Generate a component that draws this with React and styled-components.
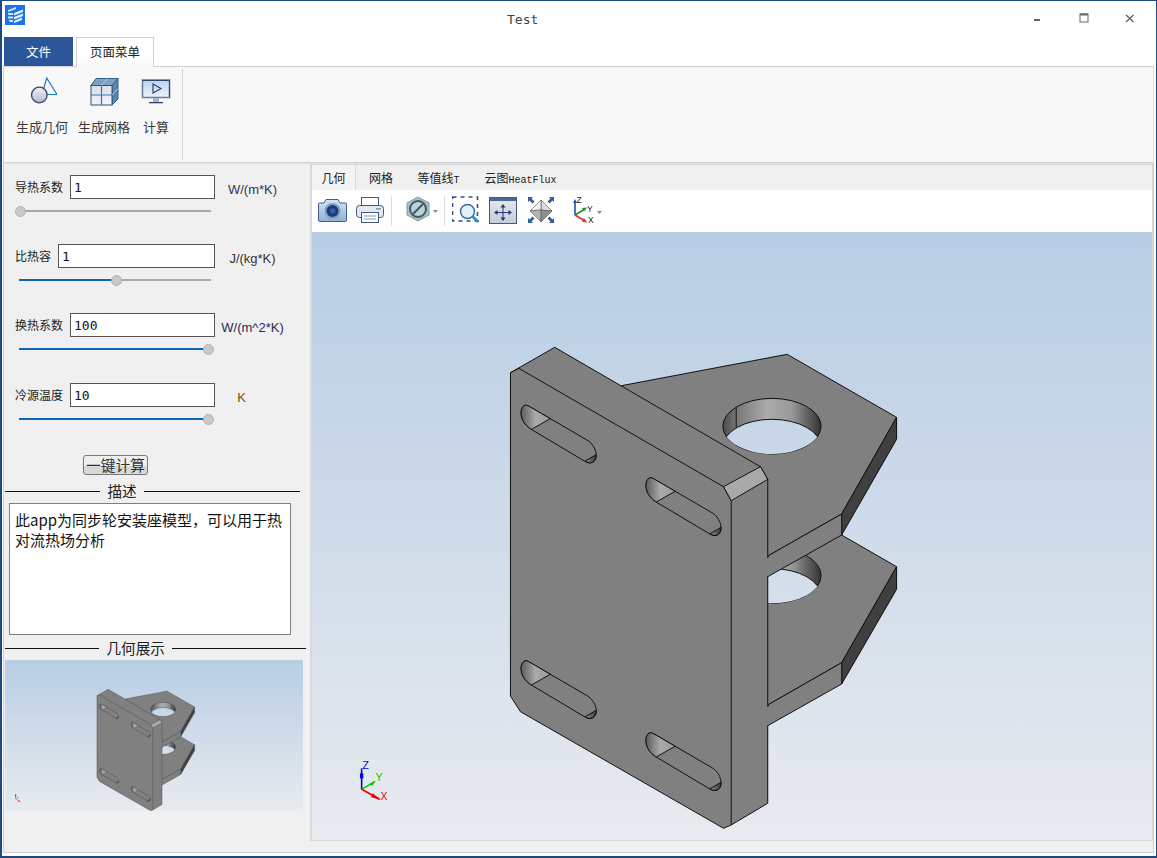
import React from 'react';
import styled, { createGlobalStyle } from 'styled-components';

const cjk = '"Noto Sans CJK SC", "Liberation Sans", sans-serif';
const mono = '"DejaVu Sans Mono", "Liberation Mono", monospace';
const navy = '#1f4a80';

const Global = createGlobalStyle`
  html, body { margin: 0; padding: 0; background: #fff; }
  * { box-sizing: border-box; }
`;

const Win = styled.div`
  width: 1157px; height: 858px; overflow: hidden; background: #fff;
  border-style: solid; border-color: ${navy}; border-width: 1px 1px 2px 2px;
  display: flex; flex-direction: column; font-family: ${cjk}; color: #222;
`;
const TitleBar = styled.div`
  height: 36px; flex: none; display: flex; align-items: flex-start; position: relative;
`;
const AppIcon = styled.svg`
  width: 20px; height: 20px; margin: 4px 0 0 3px; flex: none;
`;
const WinTitle = styled.div`
  position: absolute; left: 505px; top: 11px; font: 13px/16px ${mono}; color: #444;
`;
const WinButtons = styled.div`
  margin-left: auto; display: flex; padding-right: 2px;
`;
const WinButton = styled.svg`
  width: 45px; height: 26px; flex: none;
`;
const TabRow = styled.div`
  height: 29px; flex: none; display: flex; align-items: flex-end; padding-left: 2px; position: relative; z-index: 1;
`;
const FileTab = styled.div`
  width: 69px; height: 29px; background: #2b579a; color: #fff; font-size: 12.5px; line-height: 29px; text-align: center;
`;
const PageTab = styled.div`
  width: 78px; height: 30px; margin-left: 3px; margin-bottom: -1px; color: #222; font-size: 12.5px; line-height: 28px;
  text-align: center; border: 1px solid #d2d2d2; border-bottom: 0;
  background: linear-gradient(#fff 60%, #f8f8f8);
`;
const Ribbon = styled.div`
  height: 97px; flex: none; margin: 0 2px 0 1px; background: #f8f8f8; border: 1px solid #d2d2d2; border-right-color: #e0e0e0; display: flex;
`;
const RibbonGroup = styled.div`
  width: 179px; margin: 2px 0 2px; padding-left: 9px; border-right: 1px solid #d4d4d4; display: flex;
`;
const RibbonButton = styled.div`
  width: ${p => p.$w}px; display: flex; flex-direction: column; align-items: center; padding-top: 7px;
`;
const RibbonIcon = styled.svg`
  width: 30px; height: 30px; flex: none;
`;
const RibbonLabel = styled.div`
  margin-top: 12px; font-size: 13px; line-height: 18px; color: #3a3a3a; white-space: nowrap;
`;
const MainPanel = styled.div`
  flex: none; height: 690px; margin: 0 2px 0 1px; border: 1px solid #cfcfcf; border-top-color: #e4e4e4; background: #f0f0f0; display: flex;
`;
const LeftCol = styled.div`
  width: 306px; flex: none; padding-top: 11px; display: flex; flex-direction: column;
`;
const Param = styled.div`
  height: ${p => p.$h}px; flex: none;
`;
const ParamRow = styled.div`
  display: flex; padding-left: 11px;
`;
const ParamField = styled.div`
  width: 200px; flex: none; display: flex; gap: 7px; align-items: center;
`;
const ParamLabel = styled.div`
  font-size: 12px; line-height: 20px; white-space: nowrap; color: #222; margin-top: -1px; flex: none;
`;
const NumField = styled.div`
  flex: 1; height: 24px; background: #fff; border: 1px solid #555; padding-left: 3px; font: 13px/23px ${mono}; color: #111;
`;
const Unit = styled.div`
  width: 75px; flex: none; text-align: center; font: 13px/16px "Liberation Sans", sans-serif; margin-top: 7px; color: ${p => p.$c || '#333'};
  padding-right: ${p => p.$pr || 0}px;
`;
const SliderBox = styled.div`
  width: 196px; height: 12px; margin: 6px 0 0 11px; position: relative; display: flex; align-items: center; padding-left: 4px;
`;
const SliderOn = styled.div`
  height: 2px; background: #0d66b8; flex: none;
`;
const SliderOff = styled.div`
  height: 2px; background: #a9a9a9; flex: 1;
`;
const SliderHandle = styled.div`
  position: absolute; top: 0.5px; width: 11px; height: 11px; border-radius: 50%; background: #c9c9c9; border: 1px solid #b2b2b2;
`;
const PrimaryButton = styled.div`
  width: 65px; height: 20px; margin: 3px 0 0 79px; border: 1px solid #777; border-radius: 3px;
  background: linear-gradient(#efefef 55%, #d8d8d8 56%); font-size: 14.7px; line-height: 17px; text-align: center; color: #333; white-space: nowrap;
`;
const Section = styled.div`
  width: ${p => p.$w}px; margin-left: 1px; margin-top: ${p => p.$mt}px; display: flex; align-items: center; height: 18px; flex: none;
`;
const SectionLead = styled.div`
  width: ${p => p.$w}px; flex: none; height: 1px; background: #111;
`;
const SectionLine = styled.div`
  flex: 1; height: 1px; background: #111;
`;
const SectionText = styled.div`
  padding: 0 7.5px; font-size: 14.6px; line-height: 18px; color: #222; white-space: nowrap;
`;
const Description = styled.div`
  width: 282px; height: 132px; margin: 3px 0 0 5px; flex: none; border: 1px solid #808080; background: #fff;
  padding: 6px 5px; font-size: 15px; line-height: 20px; color: #111;
`;
const Thumb = styled.div`
  width: 298px; height: 151px; margin: 3px 0 0 1px; flex: none;
  background: linear-gradient(#b8cde4, #e8ebef);
`;
const RightCol = styled.div`
  width: 843px; height: 677px; flex: none; border: 1px solid #d8d8d8; border-left-width: 2px; display: flex; flex-direction: column;
`;
const ViewTabs = styled.div`
  height: 25px; flex: none; display: flex; background: #f0f0f0; font-size: 12px; line-height: 25px;
`;
const ViewTab = styled.div`
  flex: none; width: ${p => p.$w}px; text-align: center; white-space: nowrap; color: #222;
  border-right: ${p => (p.$active ? '1px solid #d8d8d8' : '0')};
  background: ${p => (p.$active ? '#f4f4f4' : 'transparent')};
`;
const Latin = styled.span`
  font: 10px "Liberation Mono", monospace;
`;
const Toolbar = styled.div`
  height: 42px; flex: none; background: #fff; display: flex; align-items: flex-start; padding: 6px 0 0 6px;
`;
const ToolIcon = styled.svg`
  flex: none; width: ${p => p.$w}px; height: 28px; margin-left: ${p => p.$ml || 0}px;
`;
const ToolSep = styled.div`
  width: 1px; height: 30px; background: #dcdcdc; flex: none; margin-left: ${p => p.$ml}px;
`;
const View = styled.div`
  flex: 1; min-height: 0; background: linear-gradient(#b8cde4, #e8ebef);
`;
const PartSvg = styled.svg`
  display: block; width: 100%; height: 100%;
`;

const SLOTS = [[521.3, 405.7], [646.3, 478.3], [521.3, 661.3], [646.3, 733.3]];
const SLOT_PATH = 'M7,0 L66,34.3 C71.5,37.5 75.3,44 75.3,50 C75.3,56 70,59.5 63.7,55.5 L10.3,23.7 C4,19.5 0,14 0,7 C0,2 3,-2 7,0 Z';

function Part({ sw, ids, stroke = '#111', crisp }) {
  const s = { stroke, strokeWidth: sw, strokeLinejoin: 'round' };
  return (
    <g shapeRendering={crisp ? 'crispEdges' : 'auto'}>
      {/* lower flange */}
      <polygon points="640,540 787.7,503.6 897.3,566.7 842.3,662.7 768.3,705" fill="#808080" {...s} />
      <ellipse cx="772.5" cy="575.5" rx="49.2" ry="27.8" fill={`url(#${ids}w)`} {...s} />
      <clipPath id={`${ids}c2`}><ellipse cx="772.5" cy="575.5" rx="49.2" ry="27.8" /></clipPath>
      <ellipse cx="772.5" cy="596.4" rx="49.2" ry="27.8" fill={`url(#${ids}b)`} clipPath={`url(#${ids}c2)`} {...s} />
      <polygon points="897.3,566.7 897.3,589.3 842.3,684 842.3,662.7" fill="#404040" {...s} />
      <polygon points="768.3,705 842.3,662.7 842.3,684 768.3,725.7" fill="#808080" {...s} />
      {/* upper flange */}
      <polygon points="621.7,385.7 787.7,354.3 897.3,417.3 842.3,514 768.3,556" fill="#808080" {...s} />
      <ellipse cx="772.5" cy="426.2" rx="49.2" ry="27.8" fill={`url(#${ids}w)`} {...s} />
      <clipPath id={`${ids}c1`}><ellipse cx="772.5" cy="426.2" rx="49.2" ry="27.8" /></clipPath>
      <ellipse cx="772.5" cy="447.1" rx="49.2" ry="27.8" fill={`url(#${ids}b)`} clipPath={`url(#${ids}c1)`} {...s} />
      <line x1="736.7" y1="407" x2="736.7" y2="428" {...s} />
      <polygon points="897.3,417.3 897.3,439.3 842.3,535 842.3,514" fill="#404040" {...s} />
      <polygon points="768.3,556 842.3,514 842.3,535 768.3,576.7" fill="#808080" {...s} />
      {/* plate */}
      <polygon points="510.7,372.7 555,347.3 761,466.7 768.3,479.3 768.3,803.3 731.7,825 724,828.3 520.7,711.7 510.7,696" fill="#808080" {...s} />
      <polyline points="510.7,372.7 519,368.3 724,486.7 731.7,500.7 731.7,825" fill="none" {...s} />
      <polygon points="724,486.7 731.7,500.7 768.3,479.3 761,466.7" fill="#a9a9a9" {...s} />
      {/* the flange thickness faces are flush with the plate edge: no line there */}
      <rect x="767" y="557.5" width="3" height="18" fill="#808080" />
      <rect x="767" y="706.5" width="3" height="18" fill="#808080" />
      {SLOTS.map(([x, y]) => (
        <g key={x + '-' + y} transform={`translate(${x} ${y})`}>
          <path d={SLOT_PATH} fill="#808080" {...s} />
          <path d="M7,0 L29.3,13 L10.3,23.7 C4,19.5 0,14 0,7 C0,2 3,-2 7,0 Z" fill={`url(#${ids}s)`} {...s} />
          <path d="M64,55.5 L75.2,49 C75.3,56 70,59.5 64,55.5 Z" fill={`url(#${ids}r)`} {...s} />
        </g>
      ))}
    </g>
  );
}

function PartDefs({ ids }) {
  return (
    <defs>
      <linearGradient id={`${ids}b`} gradientUnits="userSpaceOnUse" x1="0" y1="232" x2="0" y2="840">
        <stop offset="0" stopColor="#b8cde4" />
        <stop offset="1" stopColor="#e8ebef" />
      </linearGradient>
      <linearGradient id={`${ids}w`} x1="0" y1="0" x2="1" y2="0">
        <stop offset="0" stopColor="#4a4a4a" />
        <stop offset="0.14" stopColor="#777" />
        <stop offset="0.45" stopColor="#ababab" />
        <stop offset="0.7" stopColor="#999" />
        <stop offset="1" stopColor="#333" />
      </linearGradient>
      <linearGradient id={`${ids}s`} x1="0" y1="0" x2="1" y2="0">
        <stop offset="0" stopColor="#5c5c5c" />
        <stop offset="0.5" stopColor="#aaa" />
        <stop offset="1" stopColor="#9a9a9a" />
      </linearGradient>
      <linearGradient id={`${ids}r`} x1="0" y1="0" x2="1" y2="0">
        <stop offset="0" stopColor="#888" />
        <stop offset="1" stopColor="#3c3c3c" />
      </linearGradient>
    </defs>
  );
}

function Triad({ x, y, k = 1, labels = true }) {
  return (
    <g transform={`translate(${x} ${y}) scale(${k})`}>
      <line x1="0" y1="0" x2="0" y2="-21" stroke="#0000e6" strokeWidth="1.6" />
      <rect x="-1.7" y="-16" width="3.4" height="5" fill="#0000e6" />
      <line x1="0" y1="0" x2="13.5" y2="-8" stroke="#00c800" strokeWidth="1.4" />
      <polygon points="7,-5 13.5,-8.6 11,-3.6" fill="#00c800" />
      <line x1="0" y1="0" x2="18" y2="10" stroke="#f00000" strokeWidth="1.6" />
      <polygon points="11,4 19,10.5 9.5,8" fill="#f00000" />
      {labels && (
        <g fontFamily="Liberation Sans, sans-serif" fontSize="10.5">
          <text x="1" y="-20" fill="#0000e6">Z</text>
          <text x="14" y="-8" fill="#00c800">Y</text>
          <text x="19" y="11" fill="#f00000">X</text>
        </g>
      )}
    </g>
  );
}

function Slider({ value }) {
  const activeWidth = value === 0 ? 0 : 1 + value * 188;
  return (
    <SliderBox>
      <SliderOn style={{ width: activeWidth }} />
      <SliderOff />
      <SliderHandle style={{ left: value * 188 }} />
    </SliderBox>
  );
}

const PARAMS = [
  { label: '导热系数', val: '1', unit: 'W/(m*K)', s: 0, h: 69, c: '#2a3a55' },
  { label: '比热容', val: '1', unit: 'J/(kg*K)', s: 0.51, h: 69, c: '#3a3030' },
  { label: '换热系数', val: '100', unit: 'W/(m^2*K)', s: 1, h: 70, c: '#2a2a55' },
  { label: '冷源温度', val: '10', unit: 'K', s: 1, h: 69, pr: 22, c: '#8a4a00' },
];

const Arrow = ({ x, y }) => <polygon points={`${x},${y} ${x + 5},${y} ${x + 2.5},${y + 3}`} fill="#888" />;

export default function App() {
  return (
    <Win>
      <Global />
      <TitleBar>
        <AppIcon viewBox="0 0 20 20">
          <rect width="20" height="20" fill="#1a73e8" />
          <path d="M3 5 L11 2 V4 L3 7Z M3 8 H8 V10 H3Z M3 11.5 H8 V13.5 H3Z M3.5 15 H8 V17 H5Z" fill="#d4e6fc" />
          <path d="M9 8 L18 4.5 V7 L9 10.5Z M9 12 L18 8.5 V11 L9 14.5Z M9 16 L17 12.5 V15 L9 18Z" fill="#e6f1ff" />
        </AppIcon>
        <WinTitle>Test</WinTitle>
        <WinButtons>
          <WinButton viewBox="0 0 45 26"><rect x="15" y="18" width="6" height="2" fill="#666" /></WinButton>
          <WinButton viewBox="0 0 45 26"><rect x="16" y="13" width="8" height="8" fill="none" stroke="#666" /><rect x="16" y="12.5" width="8" height="2" fill="#666" /></WinButton>
          <WinButton viewBox="0 0 45 26"><path d="M17 14 L24.5 21 M24.5 14 L17 21" stroke="#666" strokeWidth="1.4" /></WinButton>
        </WinButtons>
      </TitleBar>
      <TabRow>
        <FileTab>文件</FileTab>
        <PageTab>页面菜单</PageTab>
      </TabRow>
      <Ribbon>
        <RibbonGroup>
          <RibbonButton $w={58}>
            <RibbonIcon viewBox="0 0 30 30">
              <defs>
                <linearGradient id="ci" x1="0" y1="0" x2="0" y2="1"><stop offset="0" stopColor="#eef0f6" /><stop offset="1" stopColor="#b5bcd0" /></linearGradient>
                <linearGradient id="sc" x1="0" y1="0" x2="0" y2="1"><stop offset="0" stopColor="#bcd4ee" /><stop offset="1" stopColor="#eaf2fb" /></linearGradient>
                <linearGradient id="gr" x1="0" y1="0" x2="0" y2="1"><stop offset="0" stopColor="#dbe0e8" /><stop offset="1" stopColor="#f2f4f7" /></linearGradient>
              </defs>
              <polygon points="19.7,2 30,18.5 15,18.5" fill="#f4f8fc" stroke="#1f7cc0" strokeWidth="1.2" />
              <circle cx="12.3" cy="19" r="7.8" fill="url(#ci)" stroke="#34466e" strokeWidth="1.3" />
            </RibbonIcon>
            <RibbonLabel>生成几何</RibbonLabel>
          </RibbonButton>
          <RibbonButton $w={66}>
            <RibbonIcon viewBox="0 0 30 30">
              <polygon points="7,2.5 29,2.5 23,9.5 2,9.5" fill="#7fa0be" stroke="#2f5f8f" />
              <polygon points="23,9.5 29,2.5 29,23 23,29" fill="#5b87ad" stroke="#2f5f8f" />
              <rect x="2" y="9.5" width="21" height="19.5" fill="url(#gr)" stroke="#2f4f7f" />
              <path d="M12.5 9.5 V29 M2 19 H23" stroke="#2e7cb5" strokeWidth="1.2" />
              <path d="M12.5 9.5 L18.5 2.5 M23 19 L29 12.5" stroke="#9fd0ee" strokeWidth="1" />
            </RibbonIcon>
            <RibbonLabel>生成网格</RibbonLabel>
          </RibbonButton>
          <RibbonButton $w={38}>
            <RibbonIcon viewBox="0 0 30 30">
              <rect x="1.5" y="4" width="27" height="17.5" fill="url(#sc)" stroke="#7080a0" strokeWidth="1.6" />
              <path d="M1.5 4.5 H28.5 V21" fill="none" stroke="#2f4470" strokeWidth="1" />
              <polygon points="12,8 20,12.5 12,17" fill="none" stroke="#2f4470" strokeWidth="1.2" />
              <rect x="12" y="22" width="6" height="4" fill="#a8b4c8" />
              <rect x="8" y="26" width="14" height="1.3" fill="#2f4470" />
            </RibbonIcon>
            <RibbonLabel>计算</RibbonLabel>
          </RibbonButton>
        </RibbonGroup>
      </Ribbon>
      <MainPanel>
        <LeftCol>
          {PARAMS.map(p => (
            <Param key={p.label} $h={p.h}>
              <ParamRow>
                <ParamField>
                  <ParamLabel>{p.label}</ParamLabel>
                  <NumField>{p.val}</NumField>
                </ParamField>
                <Unit $c={p.c} $pr={p.pr}>{p.unit}</Unit>
              </ParamRow>
              <Slider value={p.s} />
            </Param>
          ))}
          <PrimaryButton>一键计算</PrimaryButton>
          <Section $w={295} $mt={7}>
            <SectionLead $w={95} />
            <SectionText>描述</SectionText>
            <SectionLine />
          </Section>
          <Description>此app为同步轮安装座模型，可以用于热对流热场分析</Description>
          <Section $w={301} $mt={4}>
            <SectionLead $w={94} />
            <SectionText>几何展示</SectionText>
            <SectionLine />
          </Section>
          <Thumb>
            <PartSvg viewBox="146.5 231 1180 598" preserveAspectRatio="none">
              <PartDefs ids="t" />
              <Part sw={1.8} stroke="#4a4a4a" ids="t" />
              <Triad x={189} y={782} k={1} labels={false} />
            </PartSvg>
          </Thumb>
        </LeftCol>
        <RightCol>
          <ViewTabs>
            <ViewTab $w={44} $active>几何</ViewTab>
            <ViewTab $w={50}>网格</ViewTab>
            <ViewTab $w={65}>等值线<Latin>T</Latin></ViewTab>
            <ViewTab $w={99}>云图<Latin>HeatFlux</Latin></ViewTab>
          </ViewTabs>
          <Toolbar>
            <ToolIcon $w={29} viewBox="0 0 29 28">
              <defs>
                <linearGradient id="cam" x1="0" y1="0" x2="0" y2="1"><stop offset="0" stopColor="#d6e4f4" /><stop offset="1" stopColor="#8fb0d8" /></linearGradient>
                <linearGradient id="fitg" x1="0" y1="0" x2="0" y2="1"><stop offset="0" stopColor="#e6e9f0" /><stop offset="1" stopColor="#c5ccdb" /></linearGradient>
              </defs>
              <path d="M1.5 7 H6 L8 3.5 H20 L22 7 H27.5 Q28.5 7 28.5 8 V24 Q28.5 25.5 27 25.5 H2 Q0.5 25.5 0.5 24 V8 Q0.5 7 1.5 7Z" fill="url(#cam)" stroke="#3f5f8f" />
              <circle cx="14.5" cy="15" r="8" fill="#7f9fc8" />
              <circle cx="14.5" cy="15" r="6" fill="#1e3a70" />
              <circle cx="14.5" cy="15" r="2.8" fill="#2f5fa8" />
            </ToolIcon>
            <ToolIcon $w={28} $ml={9} viewBox="0 0 28 28">
              <rect x="5.5" y="1.5" width="17" height="9" fill="#fff" stroke="#3c5a80" />
              <rect x="0.5" y="9.5" width="27" height="12" rx="3" fill="#e4e8ee" stroke="#3c5a80" />
              <rect x="5.5" y="16.5" width="17" height="10" fill="#fff" stroke="#3c5a80" />
              <path d="M8 20 H20 M8 23 H20" stroke="#8a9ab0" />
              <rect x="20" y="12" width="5" height="1.6" fill="#8a9ab0" />
            </ToolIcon>
            <ToolSep $ml={7} />
            <ToolIcon $w={32} $ml={14} viewBox="0 0 32 28">
              <polygon points="12,1 23,7 23,19 12,25 1,19 1,7" fill="#a9c2c8" stroke="#7f9aa2" />
              <circle cx="12" cy="13" r="8" fill="#bcd0d6" stroke="#3d5a66" strokeWidth="2" />
              <path d="M7 18 L17 8" stroke="#3d5a66" strokeWidth="2" />
              <Arrow x={27} y={14} />
            </ToolIcon>
            <ToolSep $ml={6} />
            <ToolIcon $w={28} $ml={7} viewBox="0 0 28 28">
              <rect x="0.5" y="1" width="25" height="24" fill="none" stroke="#33507c" strokeWidth="1.6" strokeDasharray="4 4" />
              <circle cx="15.5" cy="15.5" r="7" fill="#e4f0fa" stroke="#3c6ea0" strokeWidth="1.5" />
              <path d="M20.5 20.5 L26.5 26" stroke="#2a88d8" strokeWidth="2.6" />
            </ToolIcon>
            <ToolIcon $w={28} $ml={9} viewBox="0 0 28 28">
              <rect x="0.5" y="1.5" width="27" height="26" fill="url(#fitg)" stroke="#3d5a85" />
              <rect x="0.5" y="1.5" width="27" height="3.5" fill="#4a6890" />
              <path d="M14 9 V24 M6.5 16.5 H21.5" stroke="#22396a" strokeWidth="1" />
              <path d="M14 8 L11.5 11.5 H16.5Z M14 25 L11.5 21.5 H16.5Z M5 16.5 L8.5 14 V19Z M23 16.5 L19.5 14 V19Z" fill="#22396a" />
            </ToolIcon>
            <ToolIcon $w={28} $ml={10} viewBox="0 0 28 28">
              <polygon points="14,4 25,15 14,14" fill="#dcdcdc" stroke="#555" strokeWidth="0.6" />
              <polygon points="14,4 3,15 14,14" fill="#efefef" stroke="#555" strokeWidth="0.6" />
              <polygon points="3,15 14,26 14,14" fill="#b4b4b4" stroke="#555" strokeWidth="0.6" />
              <polygon points="25,15 14,26 14,14" fill="#8e8e8e" stroke="#555" strokeWidth="0.6" />
              <path d="M1 1 H6 L4.5 2.5 L7.5 5.5 L5.5 7.5 L2.5 4.5 L1 6Z M27 1 H22 L23.5 2.5 L20.5 5.5 L22.5 7.5 L25.5 4.5 L27 6Z M1 27 H6 L4.5 25.5 L7.5 22.5 L5.5 20.5 L2.5 23.5 L1 22Z M27 27 H22 L23.5 25.5 L20.5 22.5 L22.5 20.5 L25.5 23.5 L27 22Z" fill="#2f5f98" />
            </ToolIcon>
            <ToolIcon $w={34} $ml={16} viewBox="0 0 34 28">
              <path d="M4 19 V6" stroke="#1c4fb0" strokeWidth="1.6" />
              <polygon points="4,3 2,7 6,7" fill="#1c4fb0" />
              <path d="M4 19 L14 13" stroke="#1f8f3c" strokeWidth="1.6" />
              <polygon points="16,11.5 11,12 13,15.5" fill="#1f8f3c" />
              <path d="M4 19 L14 25" stroke="#e03030" strokeWidth="1.6" />
              <polygon points="16,26.5 11,25.8 13,22" fill="#e03030" />
              <g fontFamily="Liberation Sans, sans-serif" fontSize="8.5" fill="#222">
                <text x="5.5" y="7">Z</text>
                <text x="16" y="16">Y</text>
                <text x="17" y="27">X</text>
              </g>
              <Arrow x={26} y={15} />
            </ToolIcon>
          </Toolbar>
          <View>
            <PartSvg viewBox="312 232 841 608" preserveAspectRatio="none">
              <PartDefs ids="m" />
              <Part sw={1} ids="m" crisp />
              <Triad x={361.7} y={789.3} />
            </PartSvg>
          </View>
        </RightCol>
      </MainPanel>
    </Win>
  );
}
